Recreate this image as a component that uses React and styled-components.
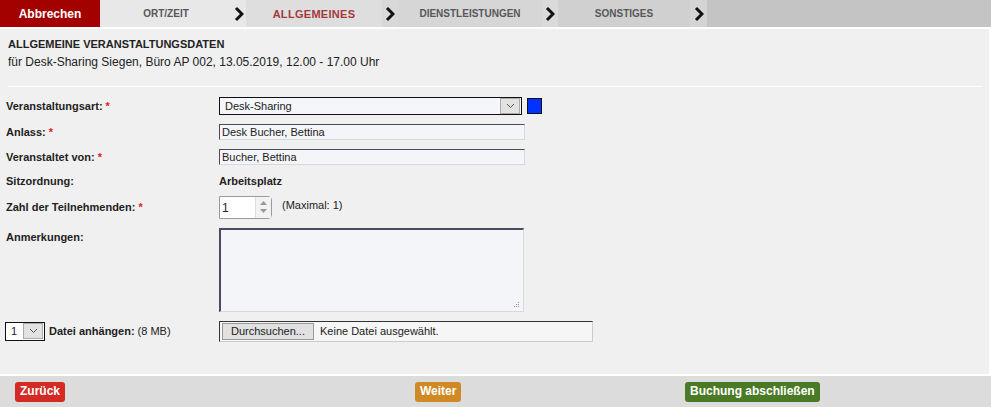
import React from 'react';
import styled, { createGlobalStyle } from 'styled-components';

const GlobalStyle = createGlobalStyle`
  html, body {
    margin: 0;
    padding: 0;
    background: #ffffff;
    font-family: "Liberation Sans", Arial, sans-serif;
    color: #222;
  }
`;

const Page = styled.div`
  width: 991px;
  height: 407px;
  display: flex;
  flex-direction: column;
  background: #fff;
`;

const TopBar = styled.nav`
  display: flex;
  height: 27px;
  background: #c4c4c4;
`;

const CancelButton = styled.div`
  width: 100px;
  display: flex;
  align-items: center;
  justify-content: center;
  background: #a30000;
  color: #fff;
  font-weight: bold;
  font-size: 12px;
`;

const Tab = styled.div`
  display: flex;
  align-items: center;
  width: ${(p) => p.$width}px;
  background: ${(p) => p.$bg};
  span {
    flex: 1;
    text-align: center;
    font-weight: bold;
    font-size: ${(p) => (p.$active ? '11px' : '10px')};
    letter-spacing: ${(p) => (p.$active ? '0.3px' : '0')};
    color: ${(p) => (p.$active ? '#a33a3a' : '#585858')};
  }
`;

const ArrowBox = styled.div`
  width: ${(p) => p.$width}px;
  height: 100%;
  display: flex;
  align-items: center;
  justify-content: center;
  background: ${(p) => p.$bg};
`;

const Content = styled.main`
  flex: 1;
  margin: 2px 2px 2px 0;
  background: #f0f0f0;
  padding: 9px 0 0 0;
`;

const Heading = styled.div`
  padding: 0 8px;
  h1 {
    margin: 0;
    font-size: 11px;
    font-weight: bold;
    color: #222;
  }
  p {
    margin: 5px 0 0;
    font-size: 12px;
    color: #222;
  }
`;

const Divider = styled.hr`
  margin: 17px 7px 0 8px;
  border: 0;
  border-top: 1px solid #ffffff;
`;

const Form = styled.div`
  padding: 5px 0 0 6px;
  display: flex;
  flex-direction: column;
`;

const Row = styled.div`
  display: flex;
  align-items: ${(p) => (p.$top ? 'flex-start' : 'center')};
  height: ${(p) => p.$h}px;
  margin-top: ${(p) => p.$mt || 0}px;
`;

const Label = styled.div`
  width: 213px;
  font-size: 11px;
  font-weight: bold;
  color: #222;
  padding-top: ${(p) => p.$pt || 0}px;
  display: flex;
  align-items: center;
  em {
    font-style: normal;
    color: #e02020;
    margin-left: 3px;
  }
  small {
    font-weight: normal;
    font-size: 11px;
    margin-left: 3px;
  }
`;

const SelectBox = styled.div`
  width: 301px;
  height: 16px;
  border: 1px solid #111;
  background: #f5f6f9;
  display: flex;
  align-items: center;
  font-size: 11px;
  span {
    flex: 1;
    padding-left: 5px;
  }
`;

const DropButton = styled.div`
  width: 18px;
  height: 14px;
  margin-right: 1px;
  border: 1px solid #aaa;
  background: #e2e2e2;
  display: flex;
  align-items: center;
  justify-content: center;
`;

const Swatch = styled.div`
  width: 13px;
  height: 14px;
  margin-left: 5px;
  background: #0033ff;
  border: 1px solid #111;
`;

const TextInput = styled.div`
  width: 302px;
  height: 14px;
  border: 1px solid #d8d8e0;
  border-top-color: #4a4a60;
  border-left-color: #4a4a60;
  background: #f4f5f8;
  font-size: 11px;
  line-height: 14px;
  padding-left: 2px;
  box-sizing: content-box;
`;

const Value = styled.div`
  font-size: 11px;
  font-weight: bold;
`;

const NumberInput = styled.div`
  width: 51px;
  height: 21px;
  border: 1px solid #9a9a9a;
  border-radius: 0 4px 4px 0;
  background: #fff;
  display: flex;
  font-size: 12px;
  span {
    flex: 1;
    padding: 4px 0 0 2px;
  }
`;

const Spinner = styled.div`
  width: 15px;
  background: #f2f2f2;
  border-left: 1px solid #ddd;
  display: flex;
  flex-direction: column;
  align-items: center;
  justify-content: space-around;
  padding: 2px 0;
`;

const Hint = styled.div`
  font-size: 11px;
  margin-left: 10px;
  margin-top: -4px;
`;

const TextArea = styled.div`
  position: relative;
  width: 302px;
  height: 81px;
  border: 1px solid #d8d8e0;
  border-top: 2px solid #4a4a60;
  border-left: 2px solid #4a4a60;
  background: #f4f5f8;
`;

const Grip = styled.svg`
  position: absolute;
  right: 3px;
  bottom: 3px;
`;

const SmallSelect = styled.div`
  width: 38px;
  height: 17px;
  border: 1px solid #111;
  background: #fff;
  display: flex;
  align-items: center;
  font-size: 11px;
  font-weight: normal;
  margin: 0 4px 0 -1px;
  span {
    flex: 1;
    padding-left: 5px;
  }
`;

const FileInput = styled.div`
  width: 370px;
  height: 19px;
  border-top: 1px solid #333;
  border-left: 1px solid #333;
  border-right: 1px solid #ccc;
  border-bottom: 1px solid #ccc;
  background: #f6f6f6;
  display: flex;
  align-items: center;
  font-size: 11px;
  padding-left: 2px;
`;

const BrowseButton = styled.div`
  height: 15px;
  padding: 0 8px;
  border: 1px solid #999;
  background: #e1e1e1;
  display: flex;
  align-items: center;
  margin-right: 6px;
`;

const Footer = styled.footer`
  height: 31px;
  background: #dcdcdc;
  display: grid;
  grid-template-columns: 400px 270px 1fr;
  align-items: center;
  padding-left: 15px;
  box-sizing: border-box;
`;

const ActionButton = styled.div`
  justify-self: start;
  background: ${(p) => p.$bg};
  color: #fff;
  font-size: 12px;
  font-weight: bold;
  padding: 2px 5px 3px;
  border-radius: 3px;
  height: 15px;
  line-height: 15px;
`;

const Chevron = () => (
  <svg width="10" height="16" viewBox="0 0 10 16">
    <polyline points="2,2 8,8 2,14" fill="none" stroke="#111" strokeWidth="3" />
  </svg>
);

const SmallChevron = () => (
  <svg width="9" height="6" viewBox="0 0 9 6">
    <polyline points="1,1 4.5,4.5 8,1" fill="none" stroke="#555" strokeWidth="1" />
  </svg>
);

const Req = () => <em>*</em>;

export default function App() {
  return (
    <Page>
      <GlobalStyle />
      <TopBar>
        <CancelButton>Abbrechen</CancelButton>
        <Tab $width={132} $bg="#e8e8e8"><span>ORT/ZEIT</span></Tab>
        <ArrowBox $width={14} $bg="#e8e8e8"><Chevron /></ArrowBox>
        <Tab $width={136} $bg="#dedede" $active><span>ALLGEMEINES</span></Tab>
        <ArrowBox $width={16} $bg="#d8d8d8"><Chevron /></ArrowBox>
        <Tab $width={144} $bg="#d6d6d6"><span>DIENSTLEISTUNGEN</span></Tab>
        <ArrowBox $width={16} $bg="#dadada"><Chevron /></ArrowBox>
        <Tab $width={132} $bg="#d0d0d0"><span>SONSTIGES</span></Tab>
        <ArrowBox $width={17} $bg="#d4d4d4"><Chevron /></ArrowBox>
      </TopBar>
      <Content>
        <Heading>
          <h1>ALLGEMEINE VERANSTALTUNGSDATEN</h1>
          <p>für Desk-Sharing Siegen, Büro AP 002, 13.05.2019, 12.00 - 17.00 Uhr</p>
        </Heading>
        <Divider />
        <Form>
          <Row $h={27}>
            <Label>Veranstaltungsart:<Req /></Label>
            <SelectBox>
              <span>Desk-Sharing</span>
              <DropButton><SmallChevron /></DropButton>
            </SelectBox>
            <Swatch />
          </Row>
          <Row $h={25}>
            <Label>Anlass:<Req /></Label>
            <TextInput>Desk Bucher, Bettina</TextInput>
          </Row>
          <Row $h={25}>
            <Label>Veranstaltet von:<Req /></Label>
            <TextInput>Bucher, Bettina</TextInput>
          </Row>
          <Row $h={23}>
            <Label>Sitzordnung:</Label>
            <Value>Arbeitsplatz</Value>
          </Row>
          <Row $h={30}>
            <Label>Zahl der Teilnehmenden:<Req /></Label>
            <NumberInput>
              <span>1</span>
              <Spinner>
                <svg width="7" height="4" viewBox="0 0 7 4"><polygon points="0,4 3.5,0 7,4" fill="#999" /></svg>
                <svg width="7" height="4" viewBox="0 0 7 4"><polygon points="0,0 3.5,4 7,0" fill="#999" /></svg>
              </Spinner>
            </NumberInput>
            <Hint>(Maximal: 1)</Hint>
          </Row>
          <Row $h={92} $mt={6} $top>
            <Label $pt={3}>Anmerkungen:</Label>
            <TextArea>
              <Grip width="6" height="6" viewBox="0 0 6 6">
                <rect x="4" y="0" width="1" height="1" fill="#999" />
                <rect x="2" y="2" width="1" height="1" fill="#999" />
                <rect x="4" y="2" width="1" height="1" fill="#999" />
                <rect x="0" y="4" width="1" height="1" fill="#999" />
                <rect x="2" y="4" width="1" height="1" fill="#999" />
                <rect x="4" y="4" width="1" height="1" fill="#999" />
              </Grip>
            </TextArea>
          </Row>
          <Row $h={22}>
            <Label>
              <SmallSelect>
                <span>1</span>
                <DropButton><SmallChevron /></DropButton>
              </SmallSelect>
              Datei anhängen:<small>(8 MB)</small>
            </Label>
            <FileInput>
              <BrowseButton>Durchsuchen...</BrowseButton>
              Keine Datei ausgewählt.
            </FileInput>
          </Row>
        </Form>
      </Content>
      <Footer>
        <ActionButton $bg="#d42a25">Zurück</ActionButton>
        <ActionButton $bg="#d08a25">Weiter</ActionButton>
        <ActionButton $bg="#4a7a25">Buchung abschließen</ActionButton>
      </Footer>
    </Page>
  );
}
